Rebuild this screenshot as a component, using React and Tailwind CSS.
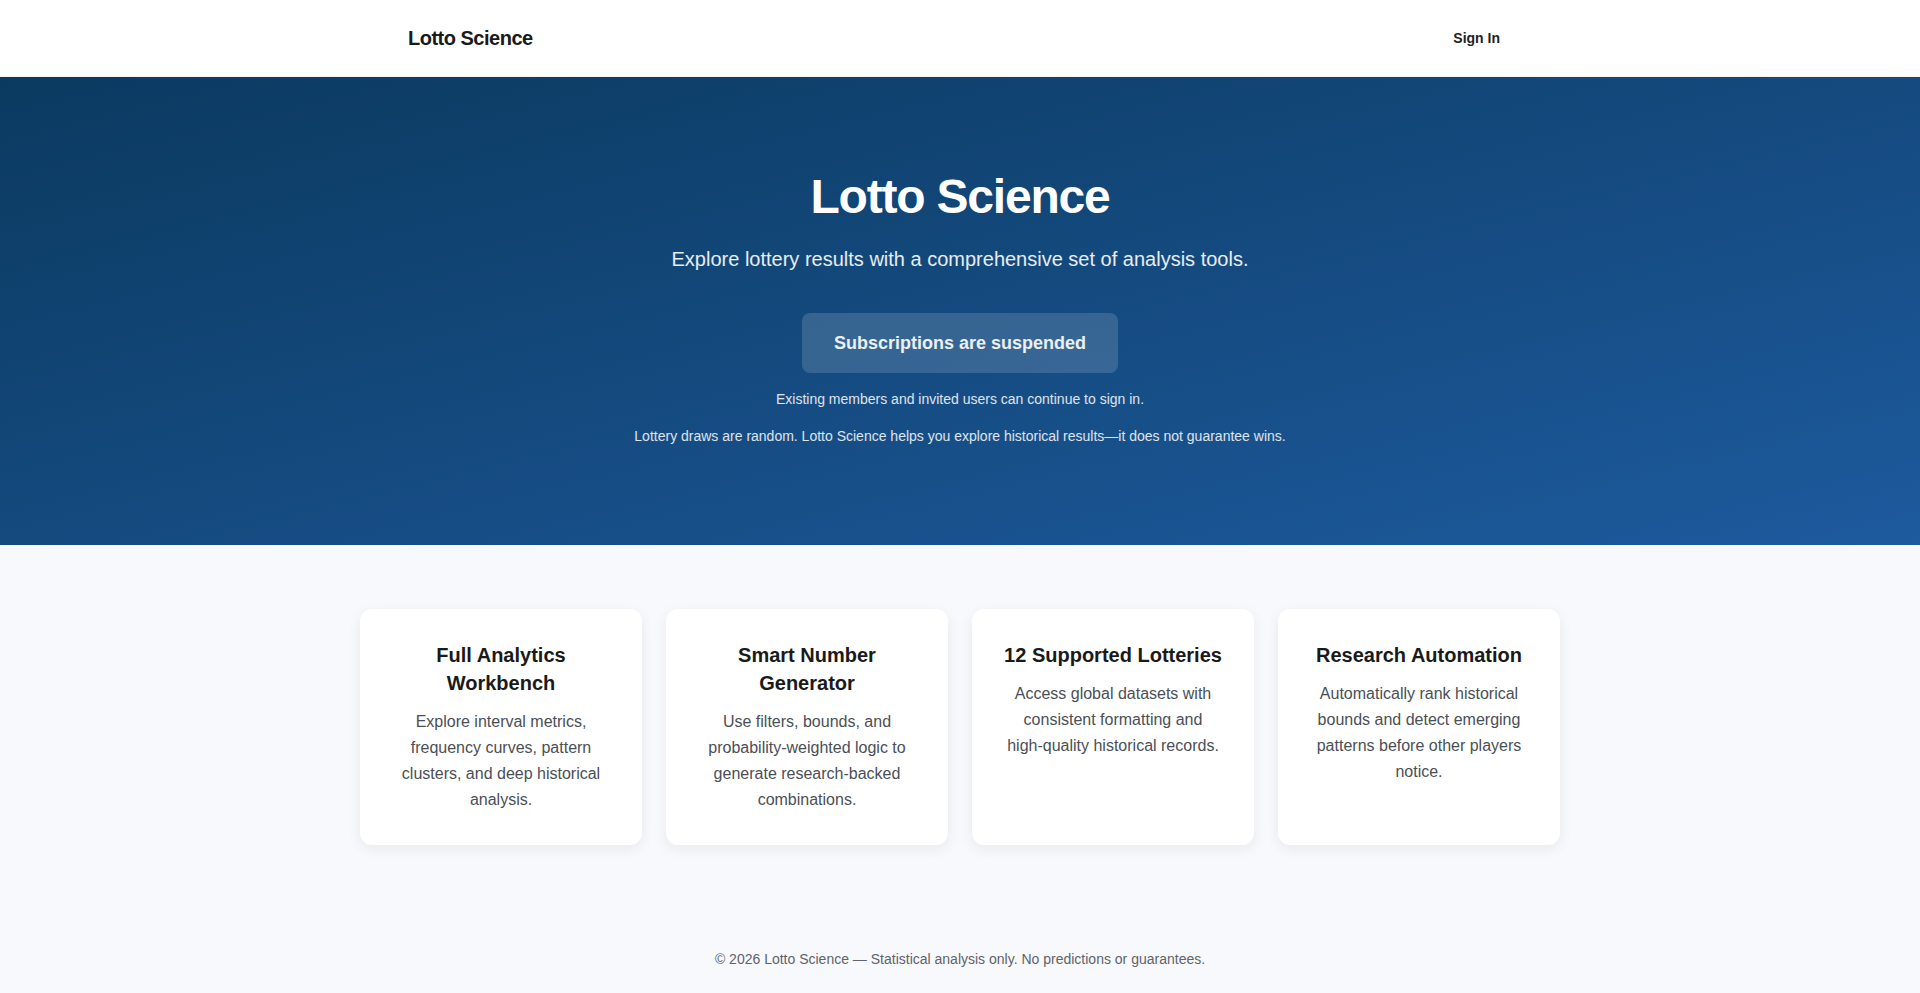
export default function App() {
  const cards = [
    {
      title: "Full Analytics Workbench",
      desc: "Explore interval metrics, frequency curves, pattern clusters, and deep historical analysis.",
    },
    {
      title: "Smart Number Generator",
      desc: "Use filters, bounds, and probability-weighted logic to generate research-backed combinations.",
    },
    {
      title: "12 Supported Lotteries",
      desc: "Access global datasets with consistent formatting and high-quality historical records.",
    },
    {
      title: "Research Automation",
      desc: "Automatically rank historical bounds and detect emerging patterns before other players notice.",
    },
  ];
  return (
    <div className="min-h-screen bg-[#f8f9fc] font-['Liberation_Sans',Arial,sans-serif] text-gray-900">
      <header className="bg-white border-b border-gray-100">
        <div className="max-w-6xl mx-auto px-6 py-6 flex items-center justify-between">
          <div className="text-xl font-bold tracking-tight text-[#1a1a1a] leading-7">Lotto Science</div>
          <button className="px-3 text-sm font-bold text-[#222]">Sign In</button>
        </div>
      </header>

      <section className="bg-linear-to-br from-[#0b3a60] to-[#1d5a9e] text-white pt-24 pb-[99px] text-center">
        <h1 className="text-5xl font-bold tracking-tight leading-none">Lotto Science</h1>
        <p className="mt-6 text-xl leading-7 text-white/90">
          Explore lottery results with a comprehensive set of analysis tools.
        </p>
        <div className="mt-10 flex justify-center">
          <div className="px-8 py-4 rounded-lg bg-white/15 text-lg leading-7 font-bold text-white/90">
            Subscriptions are suspended
          </div>
        </div>
        <p className="mt-4 text-sm leading-5 text-white/85">
          Existing members and invited users can continue to sign in.
        </p>
        <p className="mt-[17px] text-sm leading-5 text-white/85">
          Lottery draws are random. Lotto Science helps you explore historical results—it does not guarantee wins.
        </p>
      </section>

      <section className="py-16">
        <div className="max-w-[1200px] mx-auto grid grid-cols-4 gap-6">
          {cards.map((c) => (
            <div
              key={c.title}
              className="bg-white rounded-xl p-8 text-center shadow-[0_4px_14px_rgba(15,23,42,0.07)]"
            >
              <h3 className="text-xl leading-7 font-bold text-[#1a1a1a]">{c.title}</h3>
              <p className="mt-3 text-base leading-[26px] text-[#4b4f56]">{c.desc}</p>
            </div>
          ))}
        </div>
      </section>

      <footer className="py-10 text-center text-sm leading-5 text-[#5f636b]">
        © 2026 Lotto Science — Statistical analysis only. No predictions or guarantees.
      </footer>
    </div>
  );
}
